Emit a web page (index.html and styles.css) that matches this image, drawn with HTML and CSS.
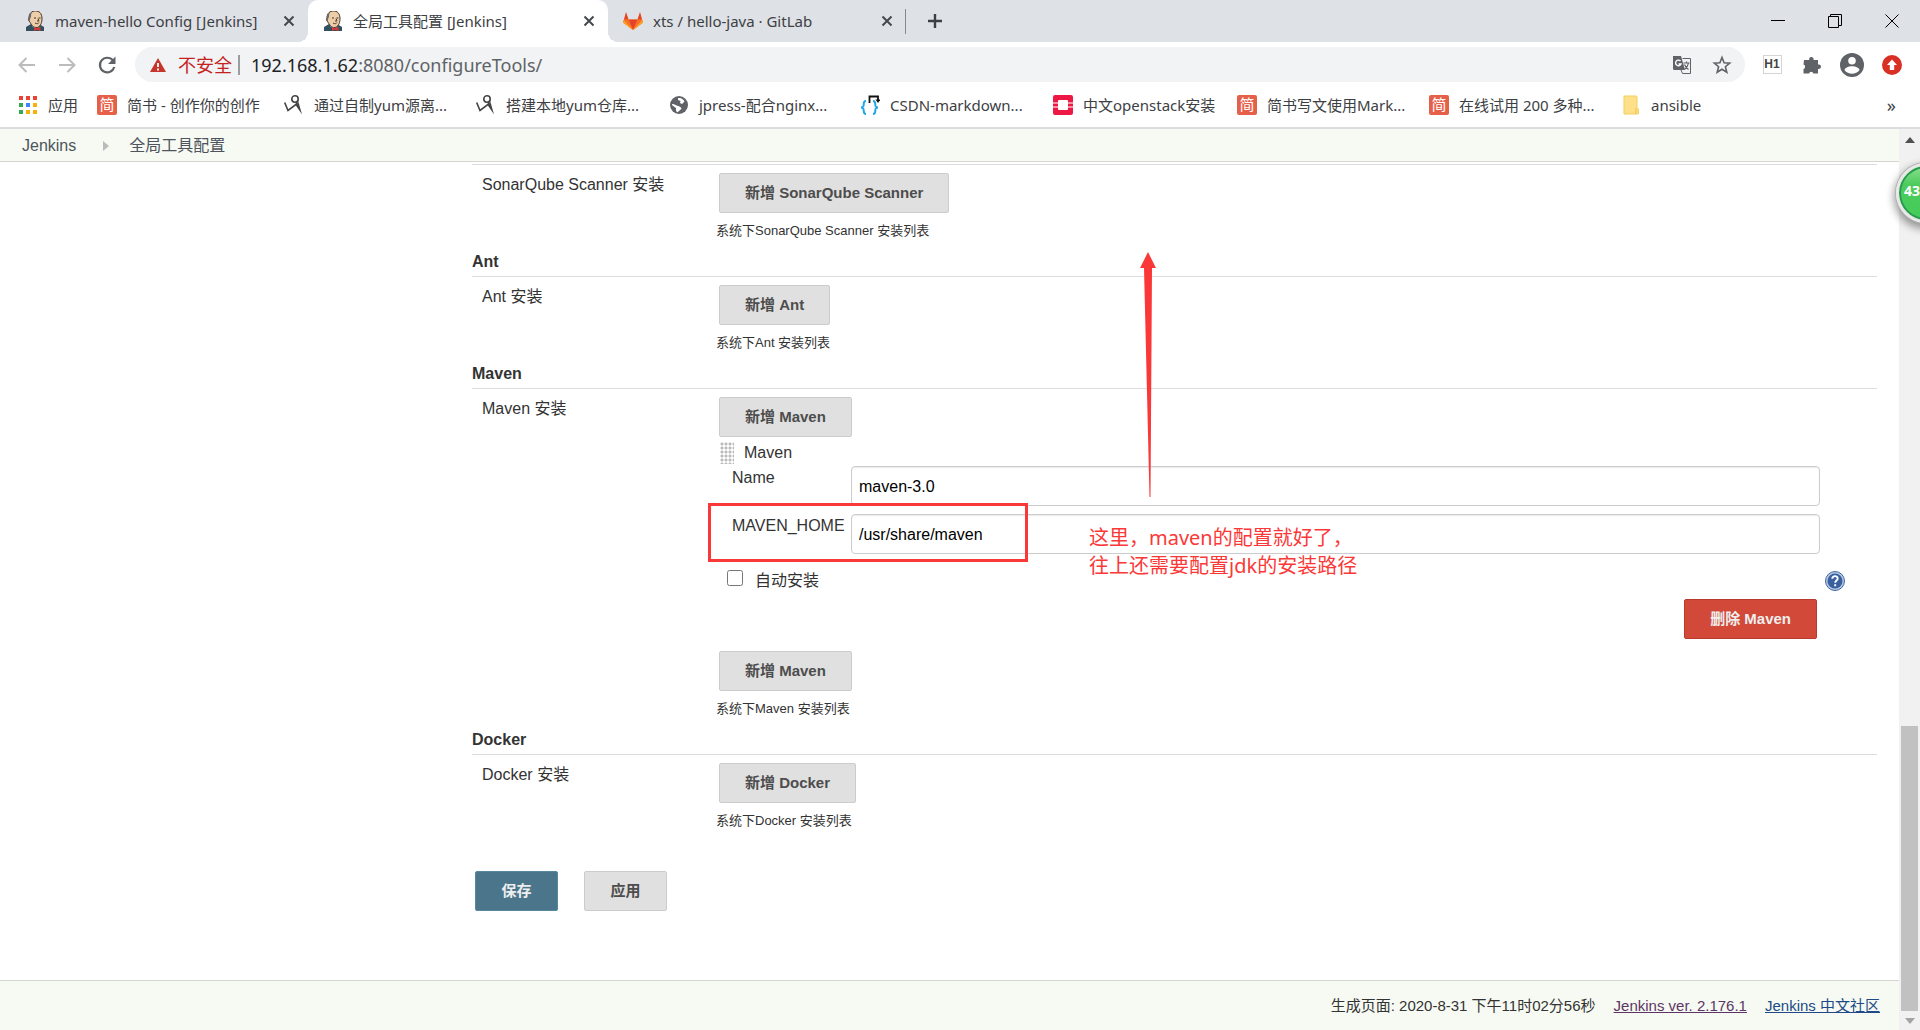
FILE: index.html
```html
<!DOCTYPE html>
<html lang="zh-CN">
<head>
<meta charset="utf-8">
<title>全局工具配置 [Jenkins]</title>
<link rel="stylesheet" href="styles.css">
</head>
<body>
<svg class="defs" aria-hidden="true">
  <symbol id="butler" viewBox="0 0 18 20">
    <path d="M0 20V16l5-3h8l5 3v4z" fill="#335061"/>
    <path d="M6 12h7v4l-3 2-4-3z" fill="#f4f1ee"/>
    <path d="M3 7c0-5 3-7 6.500-7S16 2 16 8c0 5-2.500 8-5 8.500C7 17 5 13 4 11 2.500 10 2 9 3 7z" fill="#eccfa8" stroke="#49372c" stroke-width="1"/>
    <path d="M3 9c-1-4 1-7 3-8-1 2-1 4-1 5l-1 2v3z" fill="#6d6b6d"/>
    <path d="M8 7h2M12.500 7h2M9 12c2 1 3 1 4-.5M12 7.500l1 2.500h-2" stroke="#49372c" stroke-width="1" fill="none"/>
    <path d="M8 16l3 1.300 3.500-1.300v4L11 18.700 8 20z" fill="#d33833"/>
  </symbol>
  <symbol id="close" viewBox="0 0 20 20"><path d="M5.500 5.500l9 9m0-9l-9 9" stroke="#45494d" stroke-width="2" fill="none"/></symbol>
  <symbol id="ninja" viewBox="0 0 20 20">
    <circle cx="11" cy="4" r="3.200" fill="none" stroke="#444" stroke-width="1.600"/>
    <path d="M.7 7.500L4 15.500 12 9.500l2-4" fill="none" stroke="#444" stroke-width="1.600"/>
    <path d="M11.500 10l3-3 3.500 12.500z" fill="#444"/>
  </symbol>
</svg>

<header class="browser">
  <div class="tabs">
    <div class="tab">
      <svg class="favicon"><use href="#butler"/></svg>
      <span class="tab-title">maven-hello Config [Jenkins]</span>
      <button class="tab-close" aria-label="关闭"><svg><use href="#close"/></svg></button>
    </div>
    <div class="tab tab-active">
      <svg class="favicon"><use href="#butler"/></svg>
      <span class="tab-title">全局工具配置 [Jenkins]</span>
      <button class="tab-close" aria-label="关闭"><svg><use href="#close"/></svg></button>
    </div>
    <div class="tab tab-last">
      <svg class="favicon" viewBox="0 0 20 20">
        <path d="M10 19L0 11.500 3 2l2.500 6.500h9L17 2l3 9.500z" fill="#fca326"/>
        <path d="M10 19L0 11.500l1-3 4.500 0zM10 19l10-7.500-1-3-4.500 0z" fill="#fc6d26"/>
        <path d="M10 19L5.500 8.500h9zM1 8.500L3 1l2.500 7.500zM19 8.500L17 1l-2.500 7.500z" fill="#e24329"/>
        <path d="M10 19L0 11.500l.8-2.500zM10 19l10-7.500-.8-2.500z" fill="#fca326"/>
      </svg>
      <span class="tab-title">xts / hello-java · GitLab</span>
      <button class="tab-close" aria-label="关闭"><svg><use href="#close"/></svg></button>
    </div>
    <button class="new-tab" aria-label="新标签页"><svg viewBox="0 0 20 20"><path d="M10 3v14M3 10h14" stroke="#3c4043" stroke-width="2.400"/></svg></button>
    <div class="window-controls">
      <button aria-label="最小化"><svg viewBox="0 0 14 14"><path d="M0 6.500h14" stroke="#000"/></svg></button>
      <button aria-label="还原"><svg viewBox="0 0 14 14"><path d="M.5 2.500h10v11H.5zM2.500 2.500v-2h11v11h-3" fill="none" stroke="#000"/></svg></button>
      <button aria-label="关闭窗口"><svg viewBox="0 0 14 14"><path d="M.5.5l13 13m0-13l-13 13" stroke="#000"/></svg></button>
    </div>
  </div>

  <div class="toolbar">
    <button class="tool" aria-label="后退"><svg viewBox="0 0 20 20"><path d="M18 10H3M9.500 3L2.500 10l7 7" fill="none" stroke="#babcbe" stroke-width="2"/></svg></button>
    <button class="tool" aria-label="前进"><svg viewBox="0 0 20 20"><path d="M2 10h15M10.500 3l7 7-7 7" fill="none" stroke="#babcbe" stroke-width="2"/></svg></button>
    <button class="tool" aria-label="刷新"><svg viewBox="0 0 20 20"><path d="M16 5.500A7.300 7.300 0 1 0 17.300 12" fill="none" stroke="#5f6368" stroke-width="2.200"/><path d="M18.500 1.500V9H11z" fill="#5f6368"/></svg></button>
    <div class="address">
      <svg class="warn" viewBox="0 0 16 14"><path d="M8 0l8 14H0z" fill="#c5352b"/><path d="M8 5v4M8 10.500v2" stroke="#fff" stroke-width="1.800"/></svg>
      <span class="insecure">不安全</span>
      <span class="url"><span class="host">192.168.1.62</span>:8080/configureTools/</span>
      <button class="tool" aria-label="翻译"><svg viewBox="0 0 20 20"><path d="M1 1h8l4 14H2.500A1.500 1.500 0 0 1 1 13.500z" fill="#5f6368"/><path d="M10.500 3.500h8v15h-8L9 15" fill="none" stroke="#5f6368"/><path d="M8.500 6A2.800 2.800 0 1 0 9 9H6.500" fill="none" stroke="#fff" stroke-width="1.400"/><path d="M11.500 8h6M14.500 6.500V8M16.500 8c-.5 3-2 5-4 6.500M12.500 9.500c1 2.500 2.500 4 4 5" fill="none" stroke="#5f6368" stroke-width="1.200"/></svg></button>
      <button class="tool" aria-label="收藏"><svg viewBox="0 0 20 20"><path d="M10 2.500l2.100 5.200 5.600.4-4.300 3.600 1.400 5.500L10 14.200l-4.800 3 1.400-5.500L2.300 8.100l5.600-.4z" fill="none" stroke="#5f6368" stroke-width="1.600"/></svg></button>
    </div>
    <button class="tool" aria-label="H1 扩展"><span class="h1-icon">H1</span></button>
    <button class="tool" aria-label="扩展程序"><svg viewBox="0 0 20 20"><path d="M2 5h5.200a2.300 2.300 0 1 1 4.300 0H16v4.500a2.300 2.300 0 1 1 0 4.400V18.500h-4.600a2.300 2.300 0 0 0-4.400 0H1.500v-4.600a2.300 2.300 0 0 0 0-4.400z" fill="#5f6368"/></svg></button>
    <button class="tool" aria-label="账户"><svg class="avatar" viewBox="0 0 24 24"><circle cx="12" cy="12" r="12" fill="#5f6368"/><circle cx="12" cy="7.800" r="3.800" fill="#fff"/><path d="M4.500 17c1.500-5 13.500-5 15 0-3.500 5-11.500 5-15 0z" fill="#fff"/></svg></button>
    <button class="tool" aria-label="更新"><svg viewBox="0 0 20 20"><circle cx="10" cy="10" r="10" fill="#d93025"/><path d="M10 4.500l5 5.500h-2.800v5H7.800v-5H5z" fill="#fff"/></svg></button>
  </div>

  <nav class="bookmarks">
    <a href="#"><svg viewBox="0 0 20 20"><path d="M1 1h4v4H1zM8 1h4v4H8zM15 1h4v4h-4z" fill="#ea4335"/><path d="M1 8h4v4H1zM1 15h4v4H1z" fill="#34a853"/><path d="M8 8h4v4H8z" fill="#4285f4"/><path d="M15 8h4v4h-4zM8 15h4v4H8zM15 15h4v4h-4z" fill="#fbaf0b"/></svg>应用</a>
    <a href="#"><span class="jian">简</span>简书 - 创作你的创作</a>
    <a href="#"><svg><use href="#ninja"/></svg>通过自制yum源离...</a>
    <a href="#"><svg><use href="#ninja"/></svg>搭建本地yum仓库...</a>
    <a href="#"><svg viewBox="0 0 20 20"><circle cx="10" cy="10" r="9" fill="#5f6368"/><path d="M9 3.200c3-.7 6 1.500 6.500 3.300L13 9l-2-1 .5-2L9 5zM3 9c3 0 4.500 2 6.500 2 1 1 2.500 1 3 2.500-1 2-3.500 3-4 3.800-2-1-1.500-2.800-1.500-4.300C5.500 12 4 11 3 10z" fill="#fff"/></svg>jpress-配合nginx...</a>
    <a href="#"><svg viewBox="0 0 20 20"><path d="M6 6C3 6 4 9 3.500 11 3 12.500 1 12.500 1 12.500s2 0 2.500 1.500C4 16 3 19 6 19M13 6c3 0 2 3 2.500 5 .5 1.500 2.500 1.500 2.500 1.500s-2 0-2.500 1.500c-.5 2 .5 5-2.500 5" fill="none" stroke="#1ba7e8" stroke-width="2"/><path d="M9.500 8V1.500h8.500v4" fill="none" stroke="#111" stroke-width="1.800"/><path d="M15.500 4.500h5L18 8z" fill="#111"/></svg>CSDN-markdown...</a>
    <a href="#"><svg viewBox="0 0 20 20"><rect width="20" height="20" rx="2" fill="#ed1944"/><rect x="5" y="5" width="10" height="10" rx="1" fill="#fff"/><path d="M0 8h5M15 8h5M0 12h5M15 12h5" stroke="#f9b6c3" stroke-width="1.400"/></svg>中文openstack安装</a>
    <a href="#"><span class="jian">简</span>简书写文使用Mark...</a>
    <a href="#"><span class="jian">简</span>在线试用 200 多种...</a>
    <a href="#"><svg viewBox="0 0 20 20"><path d="M3 1h12a1 1 0 0 1 1 1v11l1.500 1v4a1 1 0 0 1-1 1H3z" fill="#ffe08a" stroke="#f5cf5e"/><path d="M15 13v6" stroke="#f0c23c"/></svg>ansible</a>
    <button class="more" aria-label="更多书签">»</button>
  </nav>
</header>

<div class="viewport">
  <div class="page">
    <nav class="breadcrumb">
      <a href="#">Jenkins</a>
      <svg viewBox="0 0 6 10"><path d="M0 0l6 5-6 5z" fill="#bbb"/></svg>
      <a href="#">全局工具配置</a>
    </nav>

    <main class="config">
      <form>
        <section class="tool-section">
          <div class="setting-label">SonarQube Scanner 安装</div>
          <div class="setting">
            <button type="button" class="btn btn-add">新增 SonarQube Scanner</button>
            <p class="hint">系统下SonarQube Scanner 安装列表</p>
          </div>
        </section>

        <h2>Ant</h2>
        <section class="tool-section">
          <div class="setting-label">Ant 安装</div>
          <div class="setting">
            <button type="button" class="btn btn-add">新增 Ant</button>
            <p class="hint">系统下Ant 安装列表</p>
          </div>
        </section>

        <h2>Maven</h2>
        <section class="tool-section">
          <div class="setting-label">Maven 安装</div>
          <div class="setting">
            <button type="button" class="btn btn-add">新增 Maven</button>
            <div class="install">
              <div class="install-title"><span class="grip"></span>Maven</div>
              <div class="field">
                <label for="name">Name</label>
                <input id="name" type="text" value="maven-3.0">
              </div>
              <div class="field">
                <label for="home">MAVEN_HOME</label>
                <input id="home" type="text" value="/usr/share/maven">
                <div class="highlight"></div>
                <div class="note">
                  <svg class="arrow" viewBox="0 0 16 246"><path d="M8 0l8 16h-4l-1.500 229h-1L4 16H0z" fill="#fb3838"/></svg>
                  这里，maven的配置就好了，<br>往上还需要配置jdk的安装路径
                </div>
              </div>
              <div class="auto-install">
                <input id="auto" type="checkbox">
                <label for="auto">自动安装</label>
                <button type="button" class="help" aria-label="帮助">
                  <svg viewBox="0 0 20 20"><circle cx="10" cy="10" r="9.500" fill="#b3c6e3" stroke="#4668a0"/><circle cx="10" cy="10" r="7.500" fill="#38609f"/><path d="M7.300 7.800c0-3.600 5.600-3.400 5.400-.2-.1 1.900-2.500 2-2.500 4.200M10.200 13.200v2" fill="none" stroke="#fff" stroke-width="1.900"/></svg>
                </button>
              </div>
              <div class="install-actions"><button type="button" class="btn btn-danger">删除 Maven</button></div>
            </div>
            <button type="button" class="btn btn-add">新增 Maven</button>
            <p class="hint">系统下Maven 安装列表</p>
          </div>
        </section>

        <h2>Docker</h2>
        <section class="tool-section">
          <div class="setting-label">Docker 安装</div>
          <div class="setting">
            <button type="button" class="btn btn-add">新增 Docker</button>
            <p class="hint">系统下Docker 安装列表</p>
          </div>
        </section>

        <div class="form-actions">
          <button type="submit" class="btn btn-primary">保存</button>
          <button type="button" class="btn">应用</button>
        </div>
      </form>
    </main>

    <footer class="footer">
      <span>生成页面: 2020-8-31 下午11时02分56秒</span>
      <a class="visited" href="#">Jenkins ver. 2.176.1</a>
      <a href="#">Jenkins 中文社区</a>
    </footer>
  </div>

  <div class="scrollbar">
    <svg viewBox="0 0 10 6"><path d="M0 6l5-6 5 6z" fill="#505050"/></svg>
    <div class="scroll-space"></div>
    <div class="thumb"></div>
    <svg viewBox="0 0 10 6"><path d="M0 0l5 6 5-6z" fill="#a3a3a3"/></svg>
  </div>
  <div class="badge">43</div>
</div>
</body>
</html>
```
FILE: styles.css
```css
* { box-sizing: border-box; }

body {
  margin: 0;
  min-height: 100vh;
  display: flex;
  flex-direction: column;
  overflow-x: hidden;
  color: #333;
  background: #fff;
  font: 16px/24px "Liberation Sans", "Noto Sans CJK SC", sans-serif;
}

button {
  padding: 0;
  border: 0;
  background: none;
  font: inherit;
  color: inherit;
}

svg { display: block; flex: none; }
.defs { position: absolute; width: 0; height: 0; }

/* Browser chrome */
.browser {
  font: 15px/20px "Noto Sans", "Noto Sans CJK SC", sans-serif;
  color: #3c4043;
  border-bottom: 2px solid #dadce0;
}

.tabs {
  display: flex;
  align-items: center;
  height: 42px;
  padding-left: 10px;
  background: #dee1e6;
}

.tab {
  display: flex;
  align-items: center;
  gap: 10px;
  width: 298px;
  height: 42px;
  padding: 0 9px 0 15px;
}

.tab-active {
  position: relative;
  width: 300px;
  background: #fff;
  border-radius: 10px 10px 0 0;
}

.tab-active::before,
.tab-active::after {
  content: "";
  position: absolute;
  bottom: 0;
  width: 10px;
  height: 10px;
}
.tab-active::before { right: 100%; background: radial-gradient(circle at 0 0, transparent 10px, #fff 10px); }
.tab-active::after { left: 100%; background: radial-gradient(circle at 100% 0, transparent 10px, #fff 10px); }

.tab-last { position: relative; }
.tab-last::after {
  content: "";
  position: absolute;
  right: 0;
  top: 9px;
  width: 1px;
  height: 25px;
  background: #86898d;
}

.favicon { width: 20px; height: 20px; }
.tab-title { flex: 1; white-space: nowrap; }
.tab-close, .tab-close svg { width: 20px; height: 20px; }
.new-tab { margin-left: 19px; }
.new-tab svg { width: 20px; height: 20px; }

.window-controls { display: flex; margin-left: auto; height: 36px; }
.window-controls button { width: 57px; display: grid; place-items: center; }
.window-controls svg { width: 14px; height: 14px; }

.toolbar {
  display: flex;
  align-items: center;
  height: 45px;
  padding: 0 8px 0 7px;
}

.tool { width: 40px; height: 35px; display: grid; place-items: center; flex: none; }
.tool svg { width: 20px; height: 20px; }
.tool .avatar { width: 24px; height: 24px; }

.h1-icon {
  width: 19px;
  height: 19px;
  border: 1px solid #d4d4d4;
  font: bold 12px/17px "Liberation Sans", sans-serif;
  color: #444;
}

.address {
  display: flex;
  align-items: center;
  flex: 1;
  height: 35px;
  margin: 0 7px 0 8px;
  padding: 0 3px 0 15px;
  border-radius: 18px;
  background: #f1f3f4;
  font-size: 18px;
}

.warn { width: 16px; height: 14px; margin-right: 12px; }
.insecure { color: #c5221f; padding-right: 6px; border-right: 2px solid #9a9da1; }
.url { flex: 1; padding-left: 11px; color: #5f6368; }
.host { color: #202124; }

.bookmarks {
  display: grid;
  grid-template-columns: 79px 187px 192px 193px 191px 193px 184px 192px 192px 1fr auto;
  align-items: center;
  height: 40px;
  padding: 0 24px 4px 18px;
}
.bookmarks a {
  display: flex;
  align-items: center;
  gap: 10px;
  color: inherit;
  text-decoration: none;
  white-space: nowrap;
}
.bookmarks svg { width: 20px; height: 20px; }

.jian {
  width: 20px;
  height: 20px;
  border-radius: 2px;
  background: #e65f49;
  color: #fff;
  line-height: 18px;
  text-align: center;
}
.more { font-size: 18px; }

/* Page */
.viewport { position: relative; display: flex; flex: 1; overflow: hidden; }
.page { display: flex; flex-direction: column; flex: 1; }

.breadcrumb {
  display: flex;
  align-items: center;
  height: 33px;
  padding: 2px 0 0 22px;
  border-bottom: 1px solid #d3d7cf;
  background: #f6faf2;
}
.breadcrumb a { color: #4d545d; text-decoration: none; }
.breadcrumb svg { width: 6px; height: 10px; margin: 0 20px 0 27px; }

.config { flex: 1; padding: 2px 22px 68px 472px; }

h2 {
  margin: 11px 0 0;
  padding-bottom: 4px;
  font-size: 16px;
  line-height: 20px;
}

.tool-section {
  display: grid;
  grid-template-columns: 244px 1fr;
  padding-top: 8px;
  border-top: 1px solid #ddd;
}
.setting-label { padding-left: 10px; }

.btn {
  display: block;
  height: 40px;
  padding: 0 25px;
  border: 1px solid #ccc;
  border-radius: 2px;
  background: #e0e0e0;
  color: #4d4d4d;
  font-size: 15px;
  font-weight: bold;
}
.btn-add { margin-left: 3px; }
.btn-primary { border-color: #5788a0; background: #4b758b; color: #eee; }
.btn-danger { border-color: #b83c2d; background: #d24939; color: #eee; }

.hint { margin: 8px 0 0; font-size: 13px; line-height: 20px; }

.install { margin: 4px 0 12px; }
.install-title { display: flex; align-items: center; gap: 10px; padding-left: 4px; margin-bottom: 1px; }
.grip {
  width: 14px;
  height: 22px;
  background: radial-gradient(circle at 2px 2px, #bbb 1px, transparent 2px) 0 0 / 4px 4px;
}

.field {
  position: relative;
  display: grid;
  grid-template-columns: 119px 1fr;
  padding: 0 57px 0 16px;
  margin-bottom: 8px;
}
.field input {
  width: 100%;
  height: 40px;
  padding: 1px 7px 0;
  border: 1px solid #ccc;
  border-radius: 4px;
  box-shadow: inset 0 1px 1px rgba(0, 0, 0, 0.08);
  font: inherit;
  color: #000;
}

.highlight {
  position: absolute;
  left: -8px;
  top: -11px;
  width: 320px;
  height: 59px;
  border: 3px solid #fb3838;
}

.note {
  position: absolute;
  left: 373px;
  top: 10px;
  color: #fb3838;
  font: 20px/28px "Noto Sans", "Noto Sans CJK SC", sans-serif;
  white-space: nowrap;
}
.arrow { position: absolute; left: 51px; bottom: 82px; width: 16px; height: 246px; }

.auto-install {
  display: flex;
  align-items: center;
  margin: 15px 32px 6px 11px;
}
.auto-install input { width: 16px; height: 16px; margin: 0 12px 6px 0; }
.help { margin-left: auto; }
.help svg { width: 20px; height: 20px; }

.install-actions { display: flex; justify-content: flex-end; padding-right: 60px; }

.form-actions { display: flex; gap: 26px; padding: 40px 0 0 3px; }
.form-actions .btn { min-width: 83px; }

.footer {
  display: flex;
  justify-content: flex-end;
  gap: 18px;
  height: 50px;
  padding: 13px 19px 0 0;
  border-top: 1px solid #d3d7cf;
  background: #f6faf2;
  font-size: 15px;
}
.footer a { color: #204a87; }
.footer .visited { color: #5c3566; }

.scrollbar {
  display: flex;
  flex-direction: column;
  align-items: center;
  width: 21px;
  padding: 8px 0 6px;
  background: #f1f1f1;
}
.scrollbar svg { width: 10px; height: 6px; }
.scroll-space { flex: 583; }
.thumb { flex: 285; width: 17px; margin-bottom: 7px; background: #c1c1c1; }

.badge {
  position: absolute;
  right: -36px;
  top: 34px;
  width: 60px;
  height: 60px;
  padding-left: 5px;
  border: 3px solid #e8e8e8;
  border-radius: 50%;
  background: linear-gradient(#8be08f, #4ccb5c 35%, #43cd5a);
  box-shadow: 0 0 0 1px #b0b0b0, inset 0 0 0 2px #2a9a50, 0 4px 8px 2px rgba(0, 0, 0, 0.4);
  color: #fff;
  font: bold 14px/50px "Noto Sans", sans-serif;
}
```
